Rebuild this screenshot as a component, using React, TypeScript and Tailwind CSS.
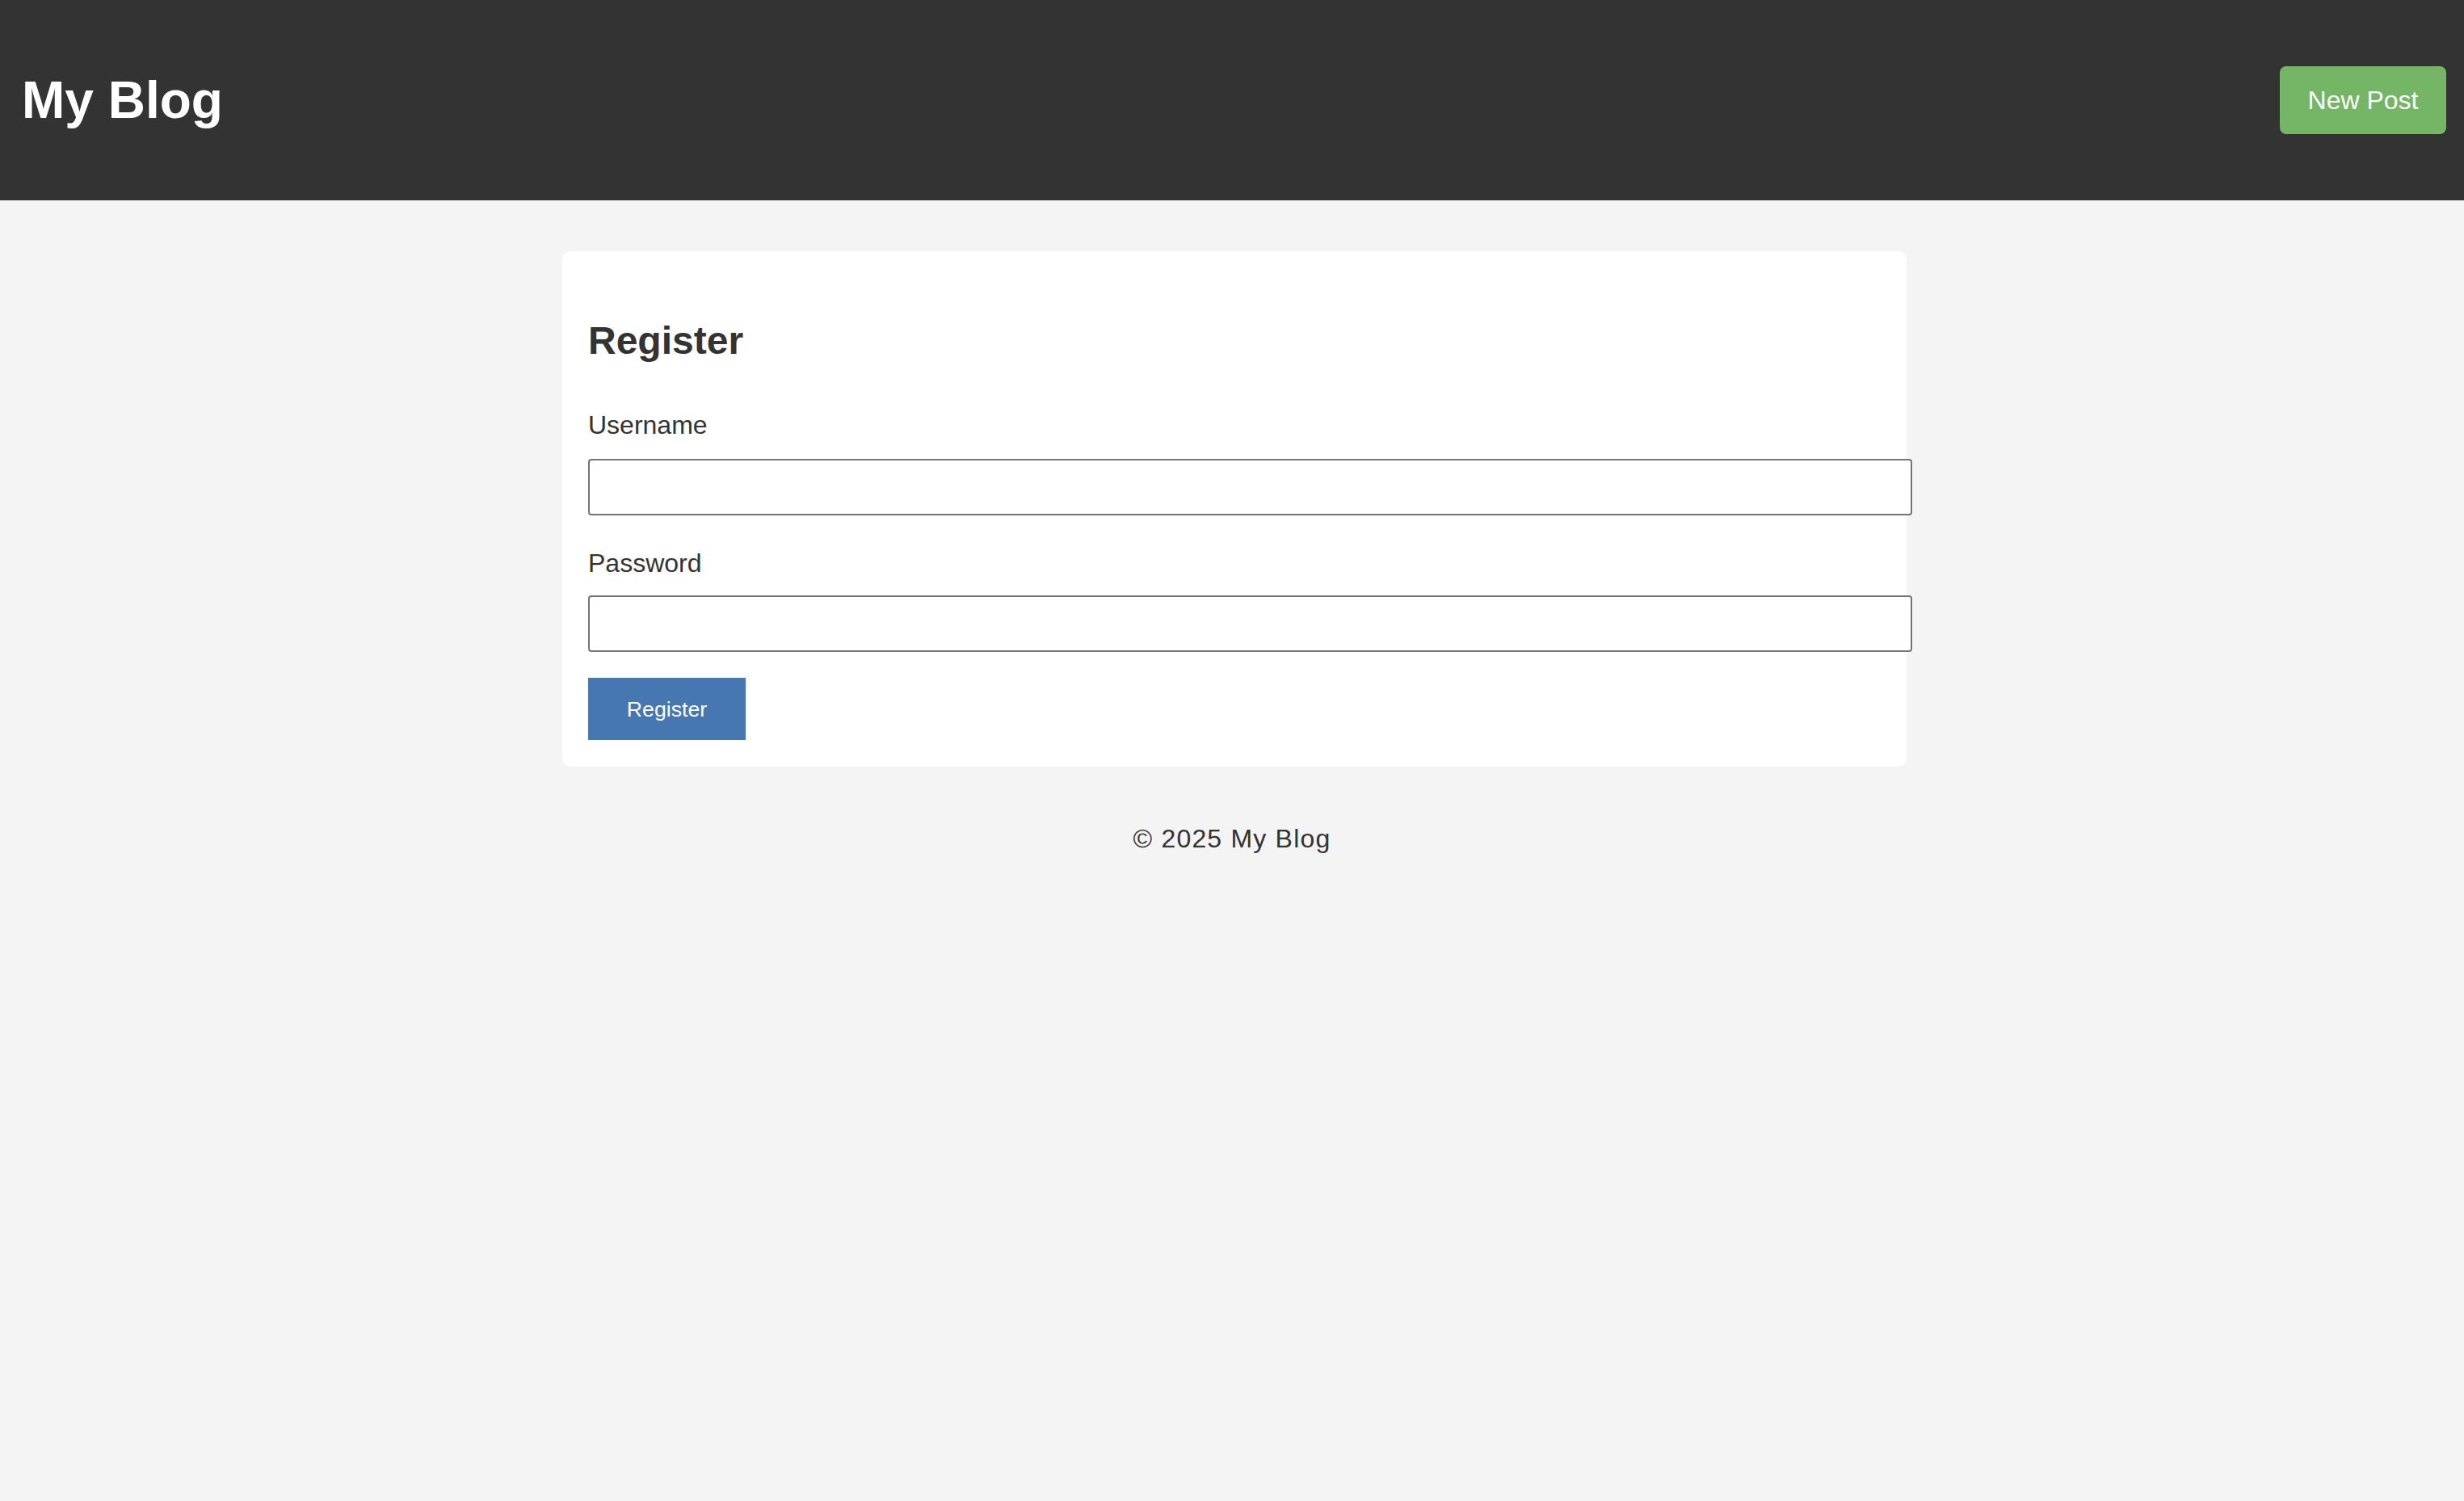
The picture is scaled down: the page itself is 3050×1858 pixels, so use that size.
import { useState } from 'react'

export default function App() {
  const [username, setUsername] = useState('')
  const [password, setPassword] = useState('')

  return (
    <div className="min-h-[1858px] bg-[#f4f4f4] font-['Liberation_Sans',Arial,sans-serif] text-[#333]">
      <header className="flex h-[248px] items-center justify-between bg-[#333] pl-[27px] pr-[22px]">
        <h1 className="text-[64px] font-bold leading-[74px] text-white">My Blog</h1>
        <button type="button" className="flex h-[84px] w-[206px] items-center justify-center rounded-[8px] bg-[#74b566] text-[32px] leading-[37px] text-white">
          New Post
        </button>
      </header>

      <main className="mt-[63px] ml-[696px] w-[1664px] rounded-[10px] bg-white px-[32px] pt-[83px] pb-[33px]">
        <h2 className="text-[48px] font-bold leading-[56px] text-[#333]">Register</h2>
        <form className="flex flex-col" onSubmit={e => e.preventDefault()}>
          <label htmlFor="username" className="mt-[58px] text-[32px] leading-[37px] text-[#333]">Username</label>
          <input id="username" type="text" value={username} onChange={e => setUsername(e.target.value)}
            className="mt-[23px] h-[70px] w-[1639px] rounded-[4px] border-2 border-[#757575] bg-white px-[16px] text-[32px] outline-none" />
          <label htmlFor="password" className="mt-[41px] text-[32px] leading-[37px] text-[#333]">Password</label>
          <input id="password" type="password" value={password} onChange={e => setPassword(e.target.value)}
            className="mt-[21px] h-[70px] w-[1639px] rounded-[4px] border-2 border-[#757575] bg-white px-[16px] text-[32px] outline-none" />
          <button type="submit" className="mt-[32px] flex h-[77px] w-[195px] items-center justify-center bg-[#4677b0] text-[26.67px] text-white">
            Register
          </button>
        </form>
      </main>

      <footer className="mt-[71px] text-center text-[32px] leading-[37px] tracking-[1.2px] text-[#333]">© 2025 My Blog</footer>
    </div>
  )
}
